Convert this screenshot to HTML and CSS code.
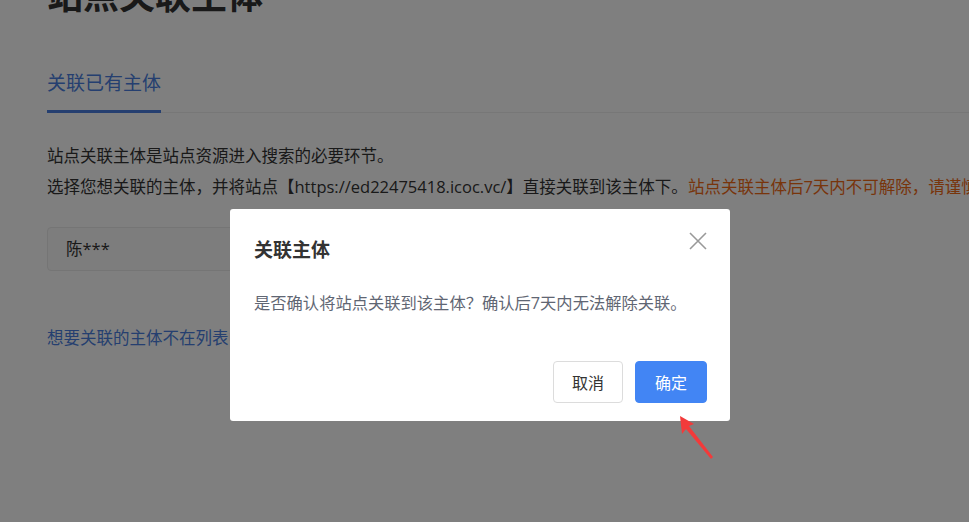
FILE: index.html
```html
<!DOCTYPE html>
<html lang="zh-CN">
<head>
  <meta charset="UTF-8">
  <title>站点关联主体</title>
  <link rel="stylesheet" href="styles.css">
</head>
<body>

  <div class="page">
    <h1>站点关联主体</h1>

    <div class="tabs">
      <span class="tab active">关联已有主体</span>
    </div>

    <p class="line">站点关联主体是站点资源进入搜索的必要环节。</p>
    <p class="line">选择您想关联的主体，并将站点【https://ed22475418.icoc.vc/】直接关联到该主体下。<span class="warn">站点关联主体后7天内不可解除，请谨慎操作。</span></p>

    <div class="select-box">陈***</div>

    <a class="link" href="#">想要关联的主体不在列表中？去新增主体</a>
  </div>

  <div class="mask">
    <div class="dialog">
      <div class="dialog-head">
        <span class="dialog-title">关联主体</span>
        <button class="close" type="button">
          <svg width="18" height="18" viewBox="0 0 18 18">
            <path d="M1 1 L17 17 M17 1 L1 17" stroke="#999" stroke-width="1.6" fill="none"/>
          </svg>
        </button>
      </div>
      <div class="dialog-body">是否确认将站点关联到该主体？确认后7天内无法解除关联。</div>
      <div class="dialog-foot">
        <button class="btn" type="button">取消</button>
        <button class="btn primary" type="button">确定</button>
      </div>
    </div>

    <!-- red pointer drawn on top of the screenshot -->
    <svg class="pointer" width="40" height="46" viewBox="0 0 40 46">
      <polygon points="4,2 18,10 13,12 37,43 35,45 10,15 6,20" fill="#f33a3a"/>
    </svg>
  </div>

</body>
</html>
```

FILE: styles.css
```css
body {
  margin: 0;
  font-family: "Open Sans", "Noto Sans CJK SC", sans-serif;
  background-color: #ffffff;
  color: #333;
  overflow: hidden;
  height: 522px;
}

.page {
  padding-left: 47px;
  white-space: nowrap;
}

h1 {
  font-size: 36px;
  line-height: 44px;
  margin: -26px 0 0;
  font-weight: bold;
}

.tabs {
  margin-top: 52px;
  border-bottom: 1px solid #eee;
}

.tab {
  display: inline-block;
  font-size: 19px;
  line-height: 26px;
  padding-bottom: 14px;
  margin-bottom: -1px;
}

.tab.active {
  color: #4a7fe0;
  border-bottom: 3px solid #4a7fe0;
}

.line {
  font-size: 16.5px;
  line-height: 31px;
  margin: 0;
}

.tabs + .line {
  margin-top: 27px;
}

.warn {
  color: #f06a16;
}

.select-box {
  margin-top: 25px;
  width: 420px;
  height: 42px;
  line-height: 42px;
  padding-left: 18px;
  border: 1px solid #eaeaea;
  border-radius: 4px;
  background-color: #fafafa;
  font-size: 16.5px;
}

.link {
  display: inline-block;
  margin-top: 54px;
  font-size: 16.5px;
  color: #4a7fe0;
  text-decoration: none;
}

.mask {
  position: fixed;
  inset: 0;
  background-color: rgba(0, 0, 0, 0.5);
}

.dialog {
  position: absolute;
  left: 230px;
  top: 209px;
  width: 500px;
  height: 212px;
  box-sizing: border-box;
  background: #fff;
  border-radius: 3px;
  padding: 28px 23px 18px 24px;
  display: flex;
  flex-direction: column;
}

.dialog-head {
  display: flex;
  justify-content: space-between;
  align-items: center;
}

.dialog-title {
  font-size: 19px;
  font-weight: bold;
  line-height: 26px;
  color: #333;
}

.close {
  border: none;
  background: none;
  padding: 0;
  margin-right: 0;
  margin-top: -18px;
  display: flex;
}

.dialog-body {
  margin-top: 28px;
  font-size: 16.3px;
  line-height: 24px;
  color: #5f6673;
}

.dialog-foot {
  margin-top: auto;
  display: flex;
  justify-content: flex-end;
  gap: 12px;
}

.btn {
  height: 42px;
  padding: 0 18px;
  border: 1px solid #dcdcdc;
  border-radius: 4px;
  background: #fff;
  font-family: inherit;
  font-size: 16px;
  color: #333;
}

.btn.primary {
  border-color: #4285f4;
  background-color: #4285f4;
  color: #fff;
  padding: 0 19px;
}

.pointer {
  position: absolute;
  left: 676px;
  top: 414px;
}
```
